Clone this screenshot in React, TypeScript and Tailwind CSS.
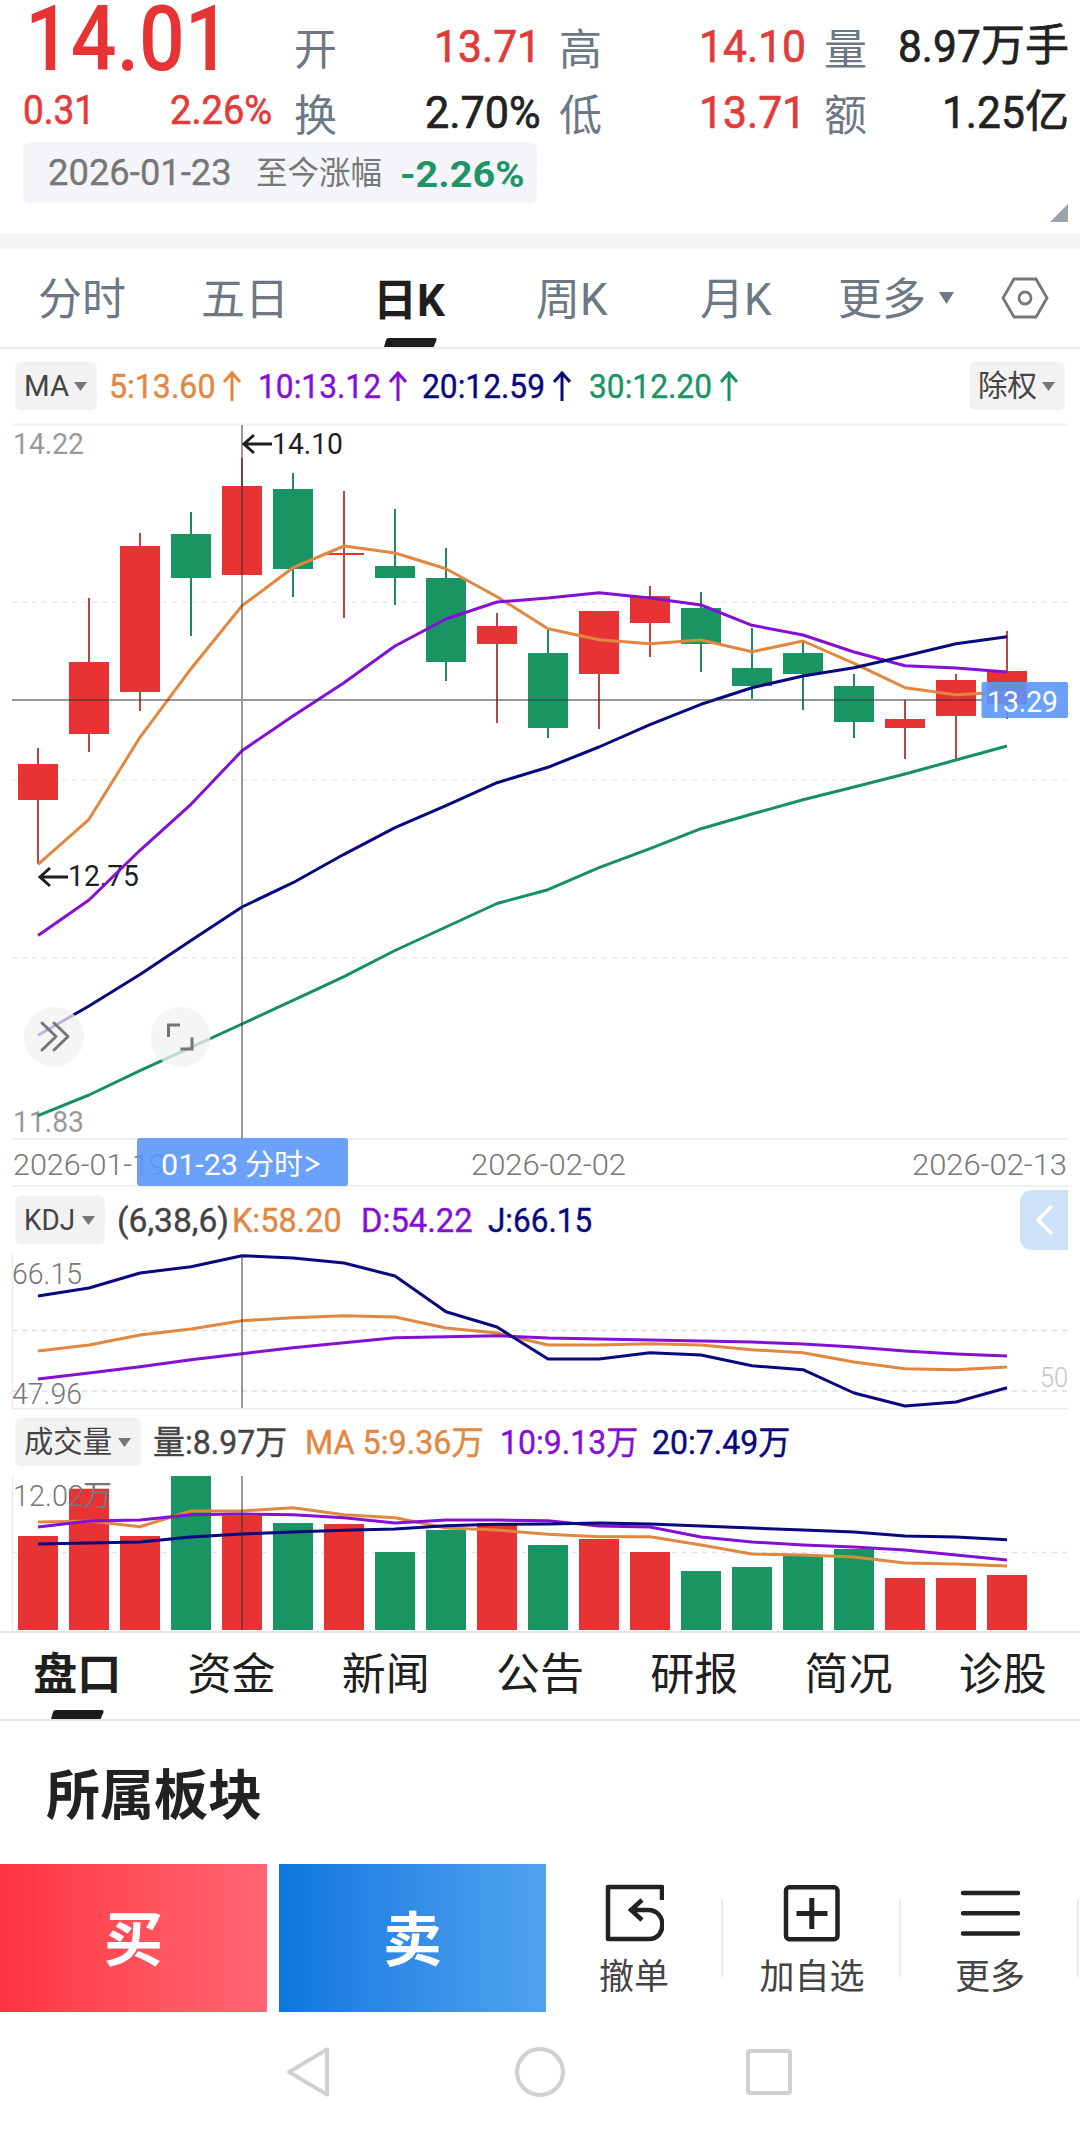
import { useLayoutEffect, useRef, useState } from 'react'
import type { ReactNode } from 'react'

const RED = '#e73333'
const GREEN = '#199564'
const ORANGE = '#e2873f'
const PURPLE = '#8410d6'
const NAVY = '#08087f'

const STEP = 51
const FIRST_X = 38
const CURSOR_X = 242

// [up, high, body top, body bottom, low]
const CANDLES: [number, number, number, number, number][] = [
  [1, 748, 764, 800, 864], [1, 598, 662, 734, 752], [1, 533, 546, 692, 711], [0, 512, 534, 578, 636],
  [1, 458, 486, 575, 575], [0, 473, 489, 569, 597], [1, 491, 553, 555, 618], [0, 509, 566, 578, 605],
  [0, 548, 578, 662, 681], [1, 613, 626, 644, 723], [0, 630, 653, 728, 738], [1, 611, 611, 674, 729],
  [1, 586, 596, 623, 657], [0, 592, 608, 644, 672], [0, 628, 668, 686, 699], [0, 641, 653, 674, 710],
  [0, 674, 686, 722, 738], [1, 700, 719, 728, 759], [1, 674, 680, 716, 759], [1, 631, 671, 704, 719],
]

const MA_LINES = [
  { color: ORANGE, ys: [864.3, 819.3, 737.3, 668.7, 605.7, 567.7, 546, 553, 568.7, 596.7, 628.7, 639.7, 643.7, 640, 651.7, 641, 663.3, 687.7, 694.7, 692] },
  { color: PURPLE, ys: [935.5, 900, 850.3, 804.3, 750.7, 716, 682.7, 646, 619, 602, 598, 592.7, 598, 605, 625.3, 635, 652, 665.7, 668, 672] },
  { color: NAVY, ys: [1035.3, 1006, 974.5, 940.5, 907, 882.7, 854.3, 827.7, 805.7, 782.7, 767.3, 747, 724.7, 704.3, 687.7, 676, 667.7, 656, 643.7, 636.7] },
  { color: '#188f63', ys: [1115.7, 1095, 1070.7, 1047.3, 1024, 1000.3, 976.7, 950.5, 927, 903.5, 889.7, 867.7, 848.7, 828.7, 814, 799.7, 787, 774, 760, 746] },
]

const KDJ_LINES = [
  { color: ORANGE, ys: [1351, 1345, 1335, 1329, 1320.7, 1317.7, 1315.7, 1317, 1328, 1333, 1345, 1345, 1343.7, 1345, 1349.7, 1352.7, 1362, 1368.7, 1369.7, 1367] },
  { color: PURPLE, ys: [1379, 1373, 1366.7, 1359.7, 1353.7, 1347.7, 1342.7, 1337.7, 1336.7, 1335.7, 1338, 1339, 1340, 1341, 1342, 1344, 1347, 1351, 1354, 1356] },
  { color: NAVY, ys: [1296, 1288, 1273, 1266.7, 1255.7, 1258, 1263, 1276, 1311.7, 1327, 1359, 1359, 1352.7, 1355, 1365.7, 1369.7, 1393, 1406, 1402, 1387.7] },
]

const VOL_TOPS = [1536, 1488.7, 1536, 1476, 1515.7, 1523, 1524, 1552, 1530, 1523, 1545, 1539, 1552, 1571, 1567, 1556, 1549, 1578, 1578, 1575]

const VOL_LINES = [
  { color: ORANGE, ys: [1522, 1521, 1526.7, 1511, 1511, 1507.7, 1514.7, 1517.7, 1528, 1530, 1534.3, 1536.7, 1536.7, 1545, 1554, 1555, 1557, 1563, 1564, 1566] },
  { color: PURPLE, ys: [1527, 1521, 1520, 1514.7, 1514, 1514.7, 1517.7, 1523, 1520, 1520, 1520.7, 1526, 1527, 1537, 1542, 1545, 1547, 1550, 1555, 1560] },
  { color: NAVY, ys: [1544, 1543, 1542, 1537, 1534, 1532, 1530.3, 1529, 1525.7, 1524.3, 1524, 1523, 1524, 1526, 1528, 1530, 1532, 1536, 1537, 1539.7] },
]

const xAt = (i: number) => FIRST_X + i * STEP

// Squeezes a run of text horizontally so that it is exactly `w` pixels wide
function Num({ w, className = '', children }: { w: number; className?: string; children: ReactNode }) {
  const ref = useRef<HTMLSpanElement>(null)
  const [scale, setScale] = useState(1)
  useLayoutEffect(() => {
    if (ref.current) setScale(w / ref.current.offsetWidth)
  }, [w])
  return (
    <span className={`inline-block shrink-0 leading-none whitespace-pre ${className}`} style={{ width: w }}>
      <span ref={ref} className="inline-block origin-left" style={{ transform: `scaleX(${scale})` }}>{children}</span>
    </span>
  )
}

function Caret({ className = '' }: { className?: string }) {
  return (
    <svg viewBox="0 0 13 9" className={`w-[13px] h-[9px] shrink-0 ${className}`}>
      <path d="M0 0h13L6.5 9z" fill="currentColor" />
    </svg>
  )
}

function UpArrow({ className = '' }: { className?: string }) {
  return (
    <svg viewBox="0 0 18 30" className={`w-[18px] h-[30px] shrink-0 ml-2 ${className}`} fill="none" stroke="currentColor" strokeWidth="3">
      <path d="M9 30V2M1 11l8-9 8 9" />
    </svg>
  )
}

function Picker({ label, w, className }: { label: string; w: number; className: string }) {
  return (
    <button className={`flex items-center justify-between h-12 pl-[9px] pr-[10px] rounded-md bg-[#f2f2f2] text-[#444] shrink-0 ${className}`}>
      <Num w={w} className="text-[30px]">{label}</Num>
      <Caret className="text-[#757575]" />
    </button>
  )
}

function Lines({ lines }: { lines: { color: string; ys: number[] }[] }) {
  return (
    <>
      {lines.map(l => (
        <polyline
          key={l.color}
          points={l.ys.map((y, i) => `${xAt(i)},${y}`).join(' ')}
          fill="none"
          stroke={l.color}
          strokeWidth="3"
          strokeLinejoin="round"
        />
      ))}
    </>
  )
}

function Label({ x, y, w, size = 30, fill = '#777', weight = 400, children }: {
  x: number; y: number; w: number; size?: number; fill?: string; weight?: number; children: string
}) {
  return (
    <text x={x} y={y} fontSize={size} fill={fill} fontWeight={weight} textLength={w} lengthAdjust="spacingAndGlyphs">
      {children}
    </text>
  )
}

function Quote({ label, children }: { label: string; children: ReactNode }) {
  return (
    <div className="flex items-center justify-between h-16">
      <span className="text-[43px] leading-none pt-2 text-[#6c7883]">{label}</span>
      <span className="flex items-center text-[45px] leading-none [-webkit-text-stroke:0.7px]">{children}</span>
    </div>
  )
}

function Header() {
  return (
    <header className="h-[234px] relative">
      <div className="flex h-[142px]">
        <div className="w-[294px] shrink-0 text-[#e33a3a]">
          <div className="h-20 flex items-center pl-[25px]">
            <Num w={206} className="text-[90px] font-medium text-[#e73333]">14.01</Num>
          </div>
          <div className="h-[62px] flex items-center justify-between pl-[23px] pr-[22px] text-[40px] [-webkit-text-stroke:0.6px]">
            <Num w={72}>0.31</Num>
            <Num w={102}>2.26%</Num>
          </div>
        </div>
        <div className="grid grid-cols-[247px_247px_245px] gap-x-[18px] gap-y-0.5 pt-3.5 content-start">
          <Quote label="开"><Num w={107} className="text-[#e33a3a]">13.71</Num></Quote>
          <Quote label="高"><Num w={107} className="text-[#e33a3a]">14.10</Num></Quote>
          <Quote label="量"><span className="flex items-center text-[#222]"><Num w={83}>8.97</Num><span className="text-[44px]">万手</span></span></Quote>
          <Quote label="换"><Num w={116} className="text-[#222]">2.70%</Num></Quote>
          <Quote label="低"><Num w={107} className="text-[#e33a3a]">13.71</Num></Quote>
          <Quote label="额"><span className="flex items-center text-[#222]"><Num w={83}>1.25</Num><span className="text-[44px]">亿</span></span></Quote>
        </div>
      </div>
      <div className="ml-[23px] w-[514px] h-[61px] rounded-md bg-[#f3f5f8] flex items-center pl-[25px] text-[#777]">
        <Num w={184} className="text-[36px] [-webkit-text-stroke:0.3px]">2026-01-23</Num>
        <span className="ml-6 text-[31.5px] leading-none pt-0.5">至今涨幅</span>
        <Num w={124} className="ml-[18px] pt-1 text-[37px] font-bold text-[#1f9467]">-2.26%</Num>
      </div>
      <svg viewBox="0 0 18 18" className="absolute w-[18px] h-[18px] left-[1050px] top-[204px]">
        <path d="M18 0v18H0z" fill="#9aa4ae" />
      </svg>
    </header>
  )
}

function PeriodTabs() {
  return (
    <nav className="flex items-center h-[100px] border-b-2 border-[#ebebeb] text-[44px] leading-none text-[#6c7883] pl-[38px]">
      <span className="w-[163px] pt-1">分时</span>
      <span className="w-[172px] pt-1">五日</span>
      <span className="w-[163px] h-full pt-[30px] font-bold text-[#1f1f1f] flex flex-col justify-between">
        日K
        <svg viewBox="0 0 53 9" className="w-[53px] h-[9px] ml-[11px]"><path d="M5 0h46q2 0 1.600 2l-3 7H0l2-7q.6-2 3-2z" fill="#1c1c1c" /></svg>
      </span>
      <span className="w-[164px] pt-1">周K</span>
      <span className="w-[138px] pt-1">月K</span>
      <span className="pt-1">更多</span>
      <svg viewBox="0 0 15 12" className="w-[15px] h-3 ml-[13px]"><path d="M0 0h15L7.500 12z" fill="#6c7883" /></svg>
      <svg viewBox="0 0 48 42" className="w-12 h-[42px] ml-[47px]" fill="none" stroke="#777">
        <path d="M13 2h22l11 19-11 19H13L2 21z" strokeWidth="2.800" />
        <circle cx="24" cy="21" r="6" strokeWidth="2.800" />
      </svg>
    </nav>
  )
}

function MaRow() {
  return (
    <div className="flex items-center h-[74px] pl-[15px] text-[33px] [-webkit-text-stroke:0.4px]">
      <Picker label="MA" w={45} className="w-[82px] [-webkit-text-stroke:0]" />
      <div className="flex items-center text-[#e2873f] ml-3"><Num w={106}>5:13.60</Num><UpArrow /></div>
      <div className="flex items-center text-[#8410d6] ml-[17px]"><Num w={123}>10:13.12</Num><UpArrow /></div>
      <div className="flex items-center text-[#08087f] ml-[15px]"><Num w={123}>20:12.59</Num><UpArrow /></div>
      <div className="flex items-center text-[#199564] ml-[18px]"><Num w={123}>30:12.20</Num><UpArrow /></div>
      <Picker label="除权" w={59} className="w-[96px] ml-auto mr-[15px] [-webkit-text-stroke:0]" />
    </div>
  )
}

function KChart() {
  return (
    <svg viewBox="0 423 1080 765" className="block w-[1080px] h-[765px]">
      <path d="M12 424.500H1068M12 1139H1068M12 1186H1068" stroke="#efefef" strokeWidth="2" />
      <path d="M12 602H1068M12 780H1068M12 958H1068" stroke="#ececec" strokeWidth="1.500" strokeDasharray="5 5" />
      <Label x={13} y={453.5} w={71} fill="#999">14.22</Label>
      <Label x={13} y={1132} w={71} fill="#999">11.83</Label>
      {CANDLES.map(([up, high, top, bottom, low], i) => (
        <g key={i} fill={up ? RED : GREEN}>
          <rect x={xAt(i) - 1} y={high} width="2" height={low - high} fill={up ? '#c04444' : '#1c8a5f'} />
          <rect x={xAt(i) - 20} y={top} width="40" height={bottom - top} />
        </g>
      ))}
      <g fill="none" stroke="#1f1f1f" strokeWidth="3">
        <path d="M272 444H245M254 435l-10 9 10 9" />
        <path d="M68 877H41M50 868l-10 9 10 9" />
      </g>
      <Label x={272} y={453.5} w={71} fill="#1f1f1f">14.10</Label>
      <Label x={68} y={886} w={71} fill="#1f1f1f">12.75</Label>
      <Lines lines={MA_LINES} />
      <path d={`M${CURSOR_X} 425V1138M12 700H982`} stroke="#333" strokeOpacity=".5" strokeWidth="2" />

      <rect x="981.500" y="682" width="86.500" height="36" rx="2" fill="#5b97fb" opacity=".9" />
      <Label x={987} y={711.5} w={71} fill="#fff">13.29</Label>

      <Label x={13} y={1175} w={153} weight={300}>2026-01-19</Label>
      <Label x={471} y={1175} w={155} weight={300}>2026-02-02</Label>
      <Label x={912} y={1175} w={155} weight={300}>2026-02-13</Label>
      <rect x="137" y="1138" width="211" height="48" rx="3" fill="#5b97fb" opacity=".9" />
      <Label x={161} y={1175} w={77} fill="#fff">01-23</Label>
      <text x="245" y="1175" fontSize="29" fill="#fff">分时</text>
      <path d="M306 1157l12 7-12 7" fill="none" stroke="#fff" strokeWidth="2.500" />

      <circle cx="54" cy="1037" r="30" fill="#f1f1f1" fillOpacity=".75" />
      <circle cx="180.500" cy="1037" r="30" fill="#f1f1f1" fillOpacity=".75" />
      <path
        d="M42 1023l14 13.500-14 13.500M54 1023l14 13.500-14 13.500"
        fill="none" stroke="#757575" strokeWidth="3" strokeLinecap="round" strokeLinejoin="round"
      />
      <path d="M168.500 1037v-12H180M180.500 1049H192V1037.500" fill="none" stroke="#757575" strokeWidth="3" />
    </svg>
  )
}

function KdjRow() {
  return (
    <div className="flex items-center h-16 pl-[15px] text-[33px] [-webkit-text-stroke:0.4px]">
      <Picker label="KDJ" w={51} className="w-[90px] [-webkit-text-stroke:0]" />
      <Num w={112} className="ml-3 text-[#444]">(6,38,6)</Num>
      <Num w={110} className="ml-[3px] text-[#e2873f]">K:58.20</Num>
      <Num w={112} className="ml-[19px] text-[#8410d6]">D:54.22</Num>
      <Num w={104} className="ml-[15px] text-[#08087f]">J:66.15</Num>
      <button className="ml-auto mr-3 w-12 h-[60px] rounded-l-xl bg-[#cde2f6] flex items-center justify-center">
        <svg viewBox="0 0 18 30" className="w-[18px] h-[30px]" fill="none" stroke="#fff" strokeWidth="3.500" strokeLinecap="round">
          <path d="M16 2L3 15l13 13" />
        </svg>
      </button>
    </div>
  )
}

function KdjChart() {
  return (
    <svg viewBox="0 1252 1080 158" className="block w-[1080px] h-[158px]">
      <path d="M12.500 1253V1408.500H1068" fill="none" stroke="#ebebeb" strokeWidth="1.500" />
      <path d="M12 1330.500H1068M12 1391H1068" stroke="#dedede" strokeWidth="1.500" strokeDasharray="5 5" />
      <Label x={12} y={1284} w={70} weight={300}>66.15</Label>
      <Label x={12} y={1404} w={70} weight={300}>47.96</Label>
      <Label x={1040} y={1387} w={28} size={28} weight={300} fill="#c4c4c4">50</Label>
      <Lines lines={KDJ_LINES} />
      <path d={`M${CURSOR_X} 1254V1408`} stroke="#333" strokeOpacity=".5" strokeWidth="2" />
    </svg>
  )
}

function VolumeRow() {
  return (
    <div className="flex items-center h-16 pl-[15px] text-[33px] [-webkit-text-stroke:0.4px]">
      <Picker label="成交量" w={88} className="w-[126px] [-webkit-text-stroke:0]" />
      <Num w={134} className="ml-3 text-[#444]">量:8.97万</Num>
      <Num w={179} className="ml-[18px] text-[#e2873f]">MA 5:9.36万</Num>
      <Num w={138} className="ml-[16px] text-[#8410d6]">10:9.13万</Num>
      <Num w={138} className="ml-[14px] text-[#08087f]">20:7.49万</Num>
    </div>
  )
}

function VolumeChart() {
  return (
    <svg viewBox="0 1474 1080 159" className="block w-[1080px] h-[159px]">
      <path d="M12.500 1476V1631" stroke="#ebebeb" strokeWidth="1.500" />
      <path d="M12 1552.500H1068" stroke="#e2e2e2" strokeWidth="1.500" strokeDasharray="5 5" />
      {VOL_TOPS.map((y, i) => (
        <rect key={i} x={xAt(i) - 20} y={y} width="40" height={1630 - y} fill={CANDLES[i][0] ? RED : GREEN} />
      ))}
      <Label x={13} y={1506} w={71} weight={300}>12.02</Label>
      <text x="83" y="1506" fontSize="29" fill="#777">万</text>
      <Lines lines={VOL_LINES} />
      <path d={`M${CURSOR_X} 1476V1630`} stroke="#333" strokeOpacity=".5" strokeWidth="2" />
      <path d="M0 1632H1080" stroke="#e4e4e4" strokeWidth="2" />
    </svg>
  )
}

const SECTIONS = ['盘口', '资金', '新闻', '公告', '研报', '简况', '诊股']

function SectionTabs() {
  return (
    <nav className="h-[88px] border-b-2 border-[#e4e4e4] grid grid-cols-7 text-[44px] leading-none text-[#1f1f1f]">
      {SECTIONS.map((s, i) => (
        <span key={s} className={`flex flex-col items-center justify-between pt-5 ${i === 0 ? 'font-bold' : ''}`}>
          {s}
          {i === 0 && <svg viewBox="0 0 53 9" className="w-[53px] h-[9px]"><path d="M5 0h46q2 0 1.600 2l-3 7H0l2-7q.6-2 3-2z" fill="#1c1c1c" /></svg>}
        </span>
      ))}
    </nav>
  )
}

function Action({ label, children }: { label: string; children: ReactNode }) {
  return (
    <button className="w-[178px] h-full flex flex-col items-center pt-[19px] pr-0.5 relative text-[#444]">
      <svg viewBox="0 0 60 60" className="w-[60px] h-[60px]" fill="none" stroke="#222" strokeWidth="4.500">{children}</svg>
      <span className="text-[35px] leading-none mt-[17px] whitespace-nowrap">{label}</span>
      <span className="absolute right-px top-[35px] w-0.5 h-[78px] bg-[#ebebeb]" />
    </button>
  )
}

function BottomBar() {
  return (
    <div className="flex h-[148px]">
      <button className="w-[267px] bg-linear-to-r from-[#ff3340] to-[#ff6571] text-white text-[59px] leading-none font-bold pt-1">买</button>
      <button className="w-[267px] ml-3 bg-linear-to-r from-[#0877de] to-[#50a2f0] text-white text-[59px] leading-none font-bold pt-1">卖</button>
      <Action label="撤单">
        <path d="M58 17V4H4v52h41c18 0 18-29-1-29H28" strokeLinejoin="round" />
        <path d="M38 17L27 27l11 10" />
      </Action>
      <Action label="加自选">
        <rect x="4" y="4.300" width="51.500" height="52" rx="3.500" />
        <path d="M29.800 15v31M14.500 30.500h31" strokeWidth="5" />
      </Action>
      <Action label="更多">
        <path d="M3 10h55M3 30.300h55M3 50.600h55" strokeLinecap="round" />
      </Action>
    </div>
  )
}

function SystemNav() {
  return (
    <div className="h-[120px] flex items-start pt-[34px] pl-[286px]">
      <svg viewBox="0 0 44 52" className="w-11 h-[52px]" fill="none" stroke="#d0d0d0" strokeWidth="4" strokeLinejoin="round">
        <path d="M3 26L41 3.500V48.500z" />
      </svg>
      <svg viewBox="0 0 52 52" className="w-[52px] h-[52px] ml-[184px]" fill="none" stroke="#d0d0d0" strokeWidth="4">
        <circle cx="26" cy="26" r="23" />
      </svg>
      <svg viewBox="0 0 46 52" className="w-[46px] h-[52px] ml-[180px]" fill="none" stroke="#d0d0d0" strokeWidth="4">
        <rect x="2" y="5" width="42" height="42" rx="2" />
      </svg>
    </div>
  )
}

export default function App() {
  return (
    <div className="w-[1080px] h-[2132px] bg-white overflow-hidden font-['Roboto','Noto_Sans_CJK_SC',sans-serif]">
      <Header />
      <div className="h-[15px] bg-[#f4f4f4]" />
      <PeriodTabs />
      <MaRow />
      <KChart />
      <KdjRow />
      <KdjChart />
      <VolumeRow />
      <VolumeChart />
      <SectionTabs />
      <h2 className="h-[143px] pt-[49px] pl-[46px] text-[54px] leading-none font-bold text-[#222]">所属板块</h2>
      <BottomBar />
      <SystemNav />
    </div>
  )
}
